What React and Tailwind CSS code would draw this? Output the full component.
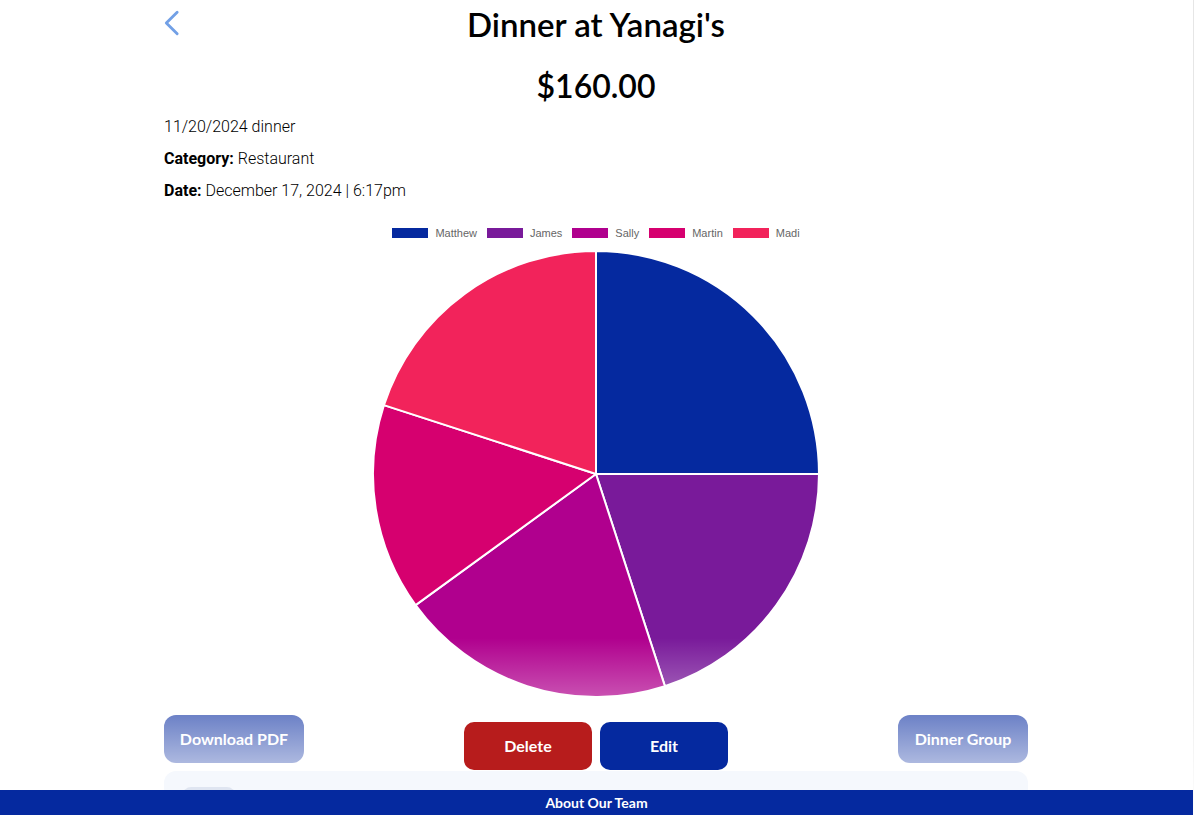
import React from 'react';

const slices = [
  { name: 'Matthew', value: 40, color: '#05299f' },
  { name: 'James', value: 32, color: '#791a9a' },
  { name: 'Sally', value: 32, color: '#b0008e' },
  { name: 'Martin', value: 24, color: '#d6006f' },
  { name: 'Madi', value: 32, color: '#f2235b' },
];

const heading = { fontFamily: 'Lato, "Open Sans", sans-serif' };
const body = { fontFamily: 'Roboto, "Liberation Sans", sans-serif' };

const PieChart = () => {
  const cx = 224;
  const cy = 224;
  const r = 223;
  const total = slices.reduce((s, d) => s + d.value, 0);
  let angle = -Math.PI / 2;

  return (
    <svg width="448" height="448" viewBox="0 0 448 448">
      {slices.map((d) => {
        const start = angle;
        const end = angle + (d.value / total) * Math.PI * 2;
        angle = end;
        const x1 = cx + r * Math.cos(start);
        const y1 = cy + r * Math.sin(start);
        const x2 = cx + r * Math.cos(end);
        const y2 = cy + r * Math.sin(end);
        const large = end - start > Math.PI ? 1 : 0;
        return (
          <path
            key={d.name}
            d={`M${cx} ${cy} L${x1} ${y1} A${r} ${r} 0 ${large} 1 ${x2} ${y2} Z`}
            fill={d.color}
            stroke="#fff"
            strokeWidth="2"
            strokeLinejoin="round"
          />
        );
      })}
    </svg>
  );
};

export default function App() {
  return (
    <div className="relative flex h-[815px] overflow-hidden bg-white text-black">
      <div className="flex-1 pr-px">
        <div className="mx-auto w-[864px]">
          {/* Header */}
          <div className="flex h-12 items-center justify-between">
            <button className="flex h-12 w-4 items-start pt-[9px] text-[#72a0e6]" aria-label="Back">
              <svg width="18" height="28" viewBox="0 0 18 28" className="-ml-[1px]">
                <path d="M15 2.5 L3.5 14 L15 25.5" fill="none" stroke="currentColor" strokeWidth="3" strokeLinecap="round" strokeLinejoin="round" />
              </svg>
            </button>
            <h1 className="text-[33px] font-semibold leading-[48px]" style={heading}>Dinner at Yanagi's</h1>
            <div className="w-4" />
          </div>

          <div className="mt-[18px] text-center text-[32px] font-semibold leading-10" style={heading}>$160.00</div>

          {/* Details */}
          <div className="mt-[9px] flex flex-col gap-2 text-base font-light leading-6" style={body}>
            <p>11/20/2024 dinner</p>
            <p><span className="font-bold">Category:</span> Restaurant</p>
            <p><span className="font-bold">Date:</span> December 17, 2024 | 6:17pm</p>
          </div>

          {/* Chart */}
          <div className="flex flex-col items-center">
            <div className="mt-[25px] flex items-center gap-[10px] text-[11px] leading-[10px] text-[#666]" style={{ fontFamily: '"Liberation Sans", Arial, sans-serif' }}>
              {slices.map((d) => (
                <div key={d.name} className="flex items-center gap-[7px]">
                  <span className="block h-[10px] w-9" style={{ backgroundColor: d.color }} />
                  <span>{d.name}</span>
                </div>
              ))}
            </div>
            <div className="mt-3">
              <PieChart />
            </div>
          </div>

          {/* Actions */}
          <div className="mt-[17px] grid grid-cols-[1fr_auto_1fr] items-start" style={heading}>
            <button className="h-12 w-[140px] rounded-xl bg-[#05299f] text-base font-bold text-white">Download PDF</button>
            <div className="relative z-20 mt-[7px] flex gap-2">
              <button className="h-12 w-32 rounded-[10px] bg-[#b71c1c] text-base font-bold text-white">Delete</button>
              <button className="h-12 w-32 rounded-[10px] bg-[#05299f] text-base font-bold text-white">Edit</button>
            </div>
            <button className="h-12 w-[130px] justify-self-end rounded-xl bg-[#05299f] text-base font-bold text-white">Dinner Group</button>
          </div>

          <div className="relative z-20 mt-px h-[100px] rounded-xl bg-[#f5f8fd] px-[19px] pt-4">
            <div className="h-10 w-[52px] rounded-lg bg-[#dfe5f1]" />
          </div>
        </div>
      </div>
      <div className="w-px bg-[#e6e6e6]" />

      {/* bottom fade */}
      <div className="pointer-events-none absolute bottom-0 left-0 right-0 z-10 h-[177px] bg-linear-to-b from-white/0 to-white/95" />

      <footer className="absolute bottom-0 left-0 right-px z-30 flex h-[25px] items-center justify-center bg-[#05299f] text-sm font-bold text-white" style={heading}>
        About Our Team
      </footer>
    </div>
  );
}
